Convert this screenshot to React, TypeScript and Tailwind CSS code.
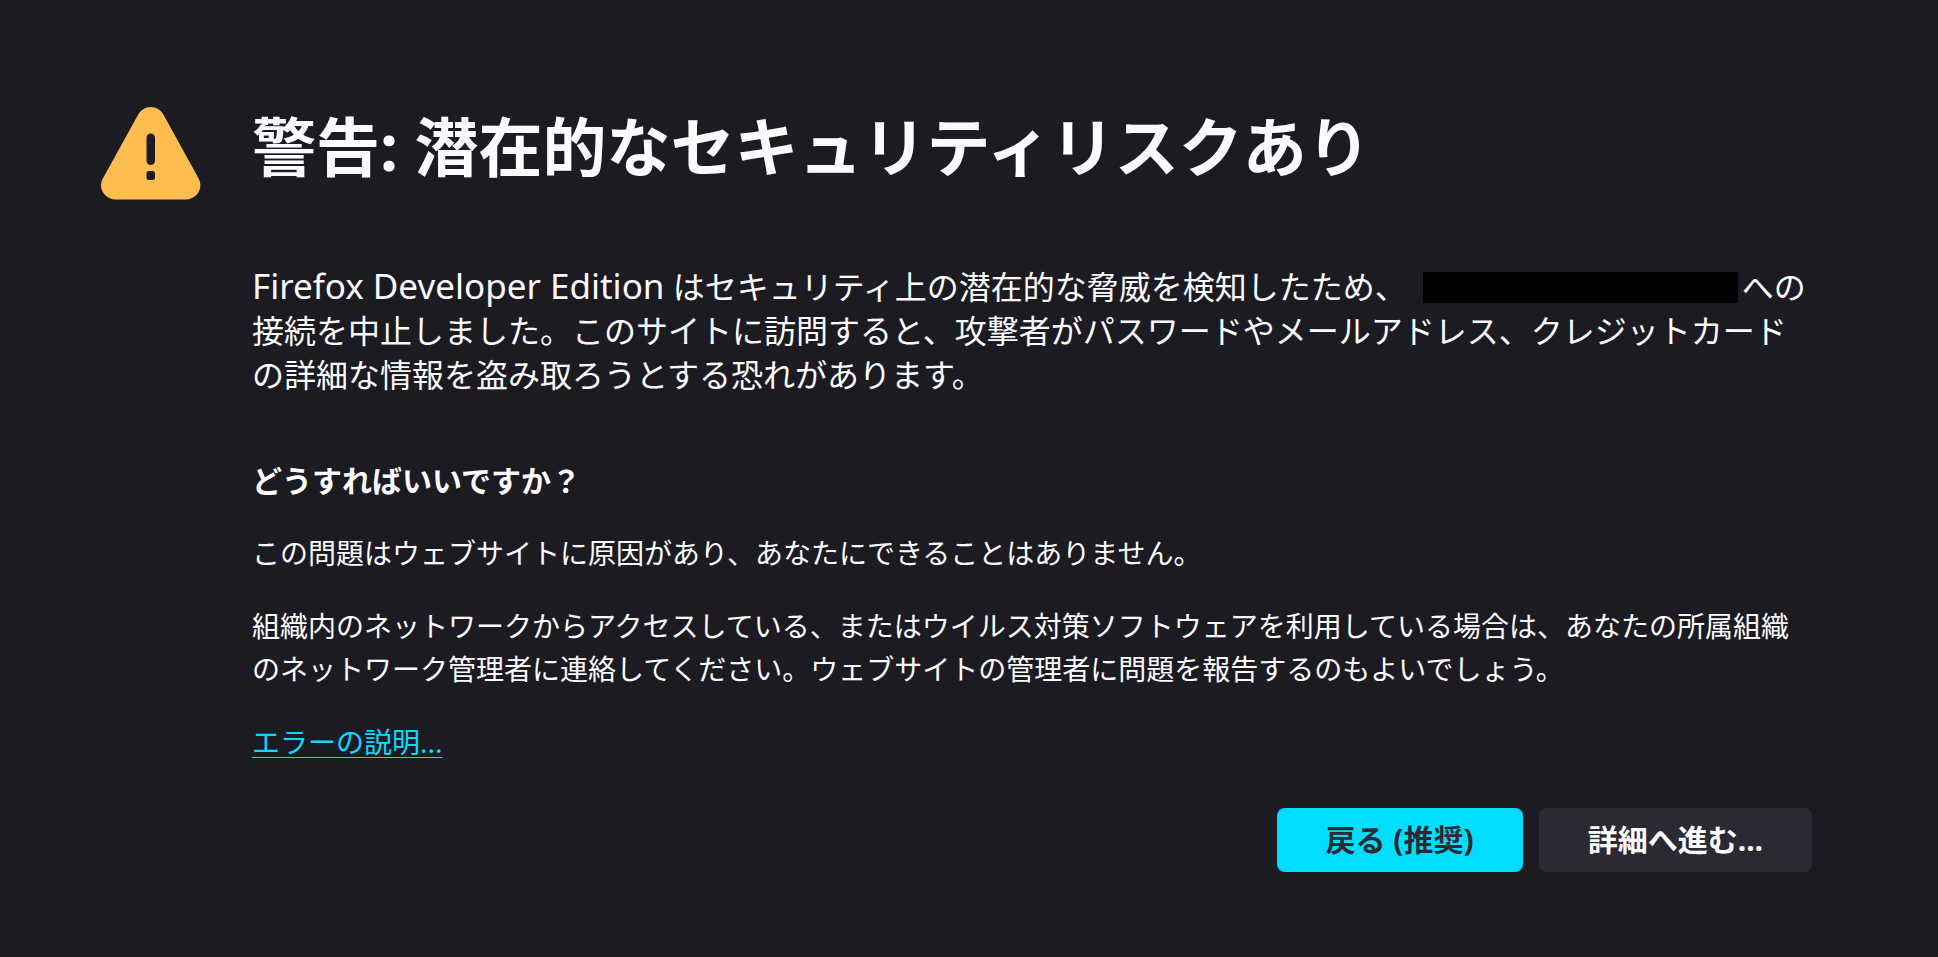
function WarningIcon() {
  return (
    <svg className="mt-[107px] h-[93px] w-[100px] shrink-0" viewBox="0 0 100 93" role="img" aria-label="警告">
      <path
        fill="#ffbd4f"
        d="M36.8 8.2C39.6 3 44.4 0 49.8 0s10.2 3 13 8.2l34.7 63c1.200 2.200 1.900 4.600 1.900 7.100C99.400 86.200 92.800 92.500 85 92.500H14.500C6.700 92.500 0 86.200 0 78.300c0-2.500.8-4.900 2-7.100z"
      />
      <rect x="45.500" y="26.500" width="8.500" height="31.500" rx="4.250" fill="#1c1b22" />
      <rect x="45.500" y="64" width="8.500" height="9" rx="2.500" fill="#1c1b22" />
    </svg>
  );
}

export default function App() {
  return (
    <div
      lang="ja"
      className="min-h-screen bg-[#1c1b22] font-['Noto_Sans','Noto_Sans_CJK_JP',sans-serif] text-[#fbfbfe]"
    >
      <main className="flex items-start gap-[51px] pr-[126px] pb-[72px] pl-[101px]">
        <WarningIcon />
        <div className="min-w-0 flex-1 pt-[103px]">
          <h1 className="text-[64px] leading-[88px] font-bold">警告: 潜在的なセキュリティリスクあり</h1>

          <p className="mt-[73px] text-[32px] leading-[44px]">
            <span className="text-[35px]">Firefox Developer Edition</span> はセキュリティ上の潜在的な脅威を検知したため、
            <span className="mr-1 mb-1.5 ml-4 inline-block h-[31px] w-[315px] bg-black align-middle" />
            への
            <br />
            接続を中止しました。このサイトに訪問すると、攻撃者がパスワードやメールアドレス、クレジットカードの詳細な情報を盗み取ろうとする恐れがあります。
          </p>

          <div className="mt-[62px] flex flex-col gap-[30px] text-[28px] leading-[43px]">
            <h2 className="text-[30px] leading-[43px] font-bold">どうすればいいですか？</h2>
            <p>この問題はウェブサイトに原因があり、あなたにできることはありません。</p>
            <p>
              組織内のネットワークからアクセスしている、またはウイルス対策ソフトウェアを利用している場合は、あなたの所属組織のネットワーク管理者に連絡してください。ウェブサイトの管理者に問題を報告するのもよいでしょう。
            </p>
            <p>
              <a href="#error" className="text-[#00ddff] underline decoration-1 underline-offset-4">
                エラーの説明...
              </a>
            </p>
          </div>

          <div className="mt-[44px] flex flex-wrap justify-end gap-4 text-[30px] leading-[44px] font-bold">
            <button type="button" className="h-16 rounded-lg bg-[#00ddff] px-[49px] text-[#2b2a33]">
              戻る (推奨)
            </button>
            <button type="button" className="h-16 rounded-lg bg-[#2b2a33] px-[49px]">
              詳細へ進む...
            </button>
          </div>
        </div>
      </main>
    </div>
  );
}
